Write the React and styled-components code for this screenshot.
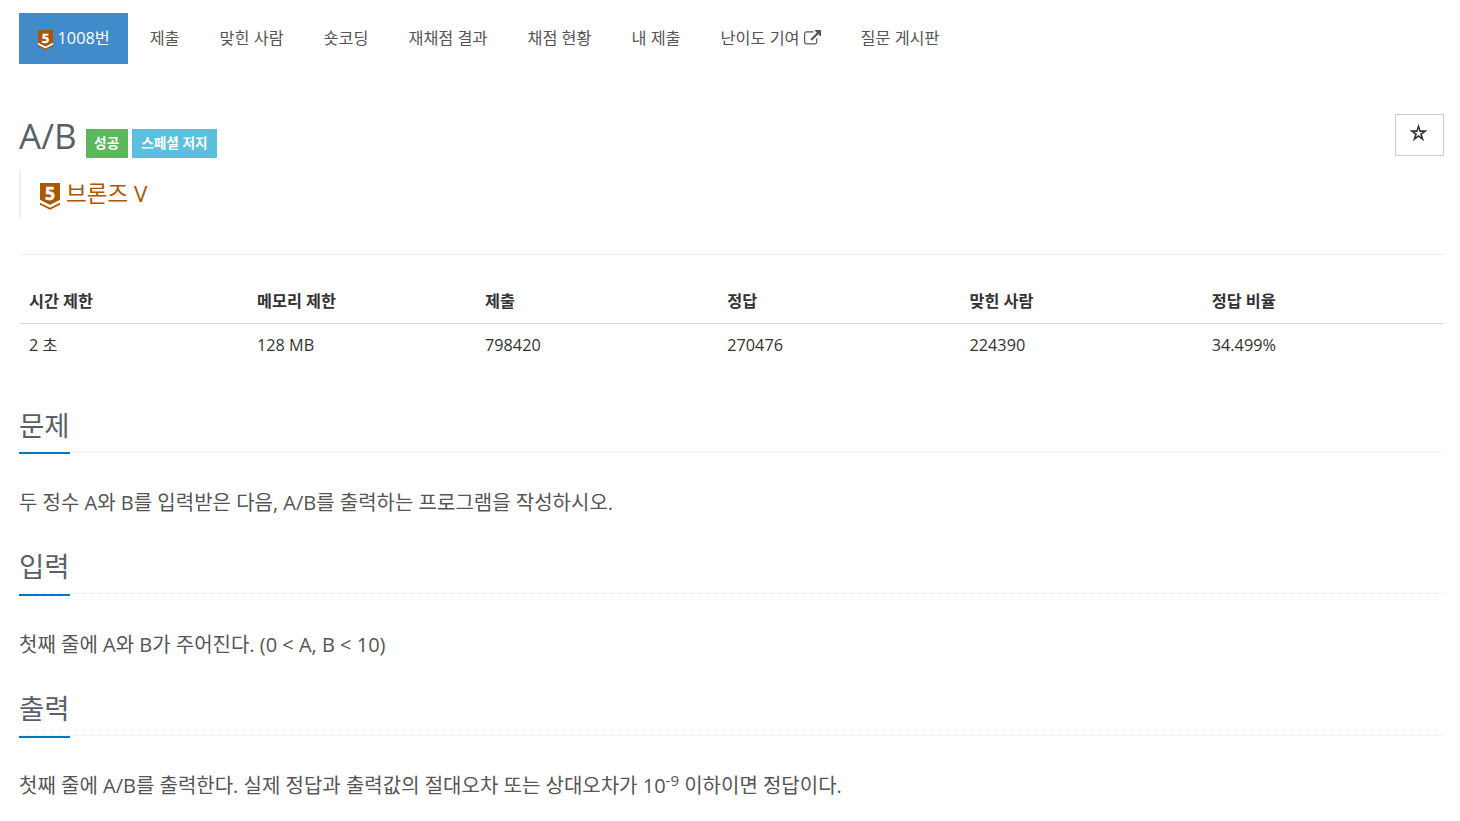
import React from "react";
import styled, { createGlobalStyle } from "styled-components";

const GlobalStyle = createGlobalStyle`
  * {
    box-sizing: border-box;
  }

  body {
    margin: 0;
    background: #fff;
    color: #333;
    font-family: "Open Sans", "Noto Sans CJK KR", sans-serif;
    font-size: 16.25px;
    line-height: 26px;
  }
`;

const Page = styled.main`
  width: 1425px;
  margin: 0 0 0 19px;
  padding-top: 13px;
`;

// Navigation
const Menu = styled.nav`
  display: flex;
  gap: 2.5px;
`;

const MenuLink = styled.a`
  display: flex;
  align-items: center;
  height: 51px;
  padding: 0 18.75px 1px;
  white-space: nowrap;
  color: ${({ $active }) => ($active ? "#fff" : "#555")};
  background: ${({ $active }) => ($active ? "#428bca" : "transparent")};
`;

const TierIcon = styled.svg`
  flex: none;
  width: ${({ $size }) => $size}px;
  height: ${({ $size }) => $size * 1.35}px;
  margin: ${({ $margin }) => $margin};
`;

const LinkIcon = styled.svg`
  width: 17px;
  height: 17px;
  margin-left: 4px;
  fill: currentColor;
`;

// Title
const Header = styled.header`
  display: flex;
  justify-content: space-between;
  align-items: flex-start;
  margin-top: 50px;
  height: 56px;
`;

const TitleRow = styled.div`
  display: flex;
  align-items: flex-start;
`;

const Title = styled.h1`
  margin: 0 9px 0 0;
  font-size: 35px;
  font-weight: 400;
  line-height: 44px;
  color: #585f69;
`;

const Label = styled.span`
  height: 29px;
  margin: 15px 4px 0 0;
  padding: 0 ${({ $pad }) => $pad}px;
  font-size: 13.7px;
  font-weight: 700;
  line-height: 28px;
  color: #fff;
  background: ${({ $color }) => $color};
`;

const StarButton = styled.button`
  display: flex;
  justify-content: center;
  width: 49px;
  height: 42px;
  padding: 8px 2px 0 0;
  border: 1px solid #ccc;
  background: #fff;
`;

const Tier = styled.blockquote`
  display: flex;
  align-items: flex-start;
  height: 48px;
  margin: 0;
  padding-left: 19px;
  border-left: 2px solid #eee;
  font-size: 22.5px;
  line-height: 48px;
  color: #ad5600;
`;

const Divider = styled.hr`
  margin: 36px 0 24px;
  border: 0;
  border-top: 1px solid #eee;
`;

// Limits and statistics
const InfoTable = styled.table`
  width: 100%;
  table-layout: fixed;
  border-collapse: collapse;
  text-align: left;

  th,
  td {
    height: 44px;
    padding: 0 10px;
  }

  th {
    border-bottom: 1px solid #ddd;
    font-weight: 700;
  }
`;

const Col = styled.col`
  width: ${({ $width }) => $width};
`;

// Problem sections
const Sections = styled.div`
  padding-top: 36.8px;
`;

const Section = styled.section`
  height: 141.6px;
`;

const Headline = styled.div`
  height: 49px;
  border-bottom: 1px dotted #e4e9f0;
`;

const SectionTitle = styled.h2`
  display: inline-block;
  height: 50.6px;
  margin: 0;
  border-bottom: 2px solid #0076c0;
  font-size: 27.5px;
  font-weight: 400;
  line-height: 44px;
  color: #585f69;
`;

const Body = styled.p`
  margin: 34.3px 0 0;
  font-size: 20px;
  line-height: 32px;
  color: #555;

  sup {
    position: relative;
    top: -0.5em;
    font-size: 75%;
    line-height: 0;
    vertical-align: baseline;
  }
`;

const menu = [
  "제출",
  "맞힌 사람",
  "숏코딩",
  "재채점 결과",
  "채점 현황",
  "내 제출",
  "난이도 기여",
  "질문 게시판",
];

const info = [
  { name: "시간 제한", value: "2 초", width: "16%" },
  { name: "메모리 제한", value: "128 MB", width: "16%" },
  { name: "제출", value: "798420", width: "17%" },
  { name: "정답", value: "270476", width: "17%" },
  { name: "맞힌 사람", value: "224390", width: "17%" },
  { name: "정답 비율", value: "34.499%", width: "17%" },
];

const sections = [
  {
    title: "문제",
    body: "두 정수 A와 B를 입력받은 다음, A/B를 출력하는 프로그램을 작성하시오.",
  },
  {
    title: "입력",
    body: "첫째 줄에 A와 B가 주어진다. (0 < A, B < 10)",
  },
  {
    title: "출력",
    body: (
      <>
        첫째 줄에 A/B를 출력한다. 실제 정답과 출력값의 절대오차 또는 상대오차가
        10<sup>-9</sup> 이하이면 정답이다.
      </>
    ),
  },
];

const BronzeTier = ({ size, margin }) => (
  <TierIcon $size={size} $margin={margin} viewBox="0 0 20 27" overflow="visible">
    <path d="M0 0H20V17L10 22L0 17Z" fill="#ad5600" />
    <path d="M0 17L10 22L20 17V20L10 25L0 20Z" fill="#fff" />
    <path d="M0 19.8L10 24.8L20 19.8V21.8L10 26.8L0 21.8Z" fill="#ad5600" />
    <text
      x="10"
      y="17"
      fill="#fff"
      stroke="#fff"
      strokeWidth="0.5"
      fontFamily="Open Sans"
      fontSize="17.5"
      fontWeight="700"
      textAnchor="middle"
    >
      5
    </text>
  </TierIcon>
);

const ExternalLink = () => (
  <LinkIcon viewBox="0 0 1792 1792">
    <path d="M1408 928v320q0 119-84.5 203.5t-203.5 84.5h-832q-119 0-203.5-84.5t-84.5-203.5v-832q0-119 84.5-203.5t203.5-84.5h704q14 0 23 9t9 23v64q0 14-9 23t-23 9h-704q-66 0-113 47t-47 113v832q0 66 47 113t113 47h832q66 0 113-47t47-113v-320q0-14 9-23t23-9h64q14 0 23 9t9 23zm384-864v512q0 26-19 45t-45 19-45-19l-176-176-652 652q-10 10-23 10t-23-10l-114-114q-10-10-10-23t10-23l652-652-176-176q-19-19-19-45t19-45 45-19h512q26 0 45 19t19 45z" />
  </LinkIcon>
);

const Star = () => (
  <svg width="19" height="19" viewBox="0 0 18 18">
    <path
      fill="#333"
      fillRule="evenodd"
      d="M9 .8L11 6.9H17.6L12.3 10.8L14.3 17.2L9 13.3L3.7 17.2L5.7 10.8L.4 6.9H7ZM9 5.2L8.1 8.5H5L7.6 10.3L6.6 13.2L9 11.4L11.4 13.2L10.4 10.3L13 8.5H9.9Z"
    />
  </svg>
);

const App = () => {
  return (
    <>
      <GlobalStyle />
      <Page>
        <Menu>
          <MenuLink $active>
            <BronzeTier size={15} margin="4px 4.8px 0 0" />
            1008번
          </MenuLink>
          {menu.map((item) => (
            <MenuLink key={item}>
              {item}
              {item === "난이도 기여" && <ExternalLink />}
            </MenuLink>
          ))}
        </Menu>

        <Header>
          <TitleRow>
            <Title>A/B</Title>
            <Label $color="#5cb85c" $pad={8.5}>
              성공
            </Label>
            <Label $color="#5bc0de" $pad={9.4}>
              스페셜 저지
            </Label>
          </TitleRow>
          <StarButton aria-label="star">
            <Star />
          </StarButton>
        </Header>

        <Tier>
          <BronzeTier size={20} margin="13px 6px 0 0" />
          브론즈 V
        </Tier>
        <Divider />

        <InfoTable>
          <colgroup>
            {info.map(({ name, width }) => (
              <Col key={name} $width={width} />
            ))}
          </colgroup>
          <thead>
            <tr>
              {info.map(({ name }) => (
                <th key={name}>{name}</th>
              ))}
            </tr>
          </thead>
          <tbody>
            <tr>
              {info.map(({ name, value }) => (
                <td key={name}>{value}</td>
              ))}
            </tr>
          </tbody>
        </InfoTable>

        <Sections>
          {sections.map(({ title, body }) => (
            <Section key={title}>
              <Headline>
                <SectionTitle>{title}</SectionTitle>
              </Headline>
              <Body>{body}</Body>
            </Section>
          ))}
        </Sections>
      </Page>
    </>
  );
};

export default App;
